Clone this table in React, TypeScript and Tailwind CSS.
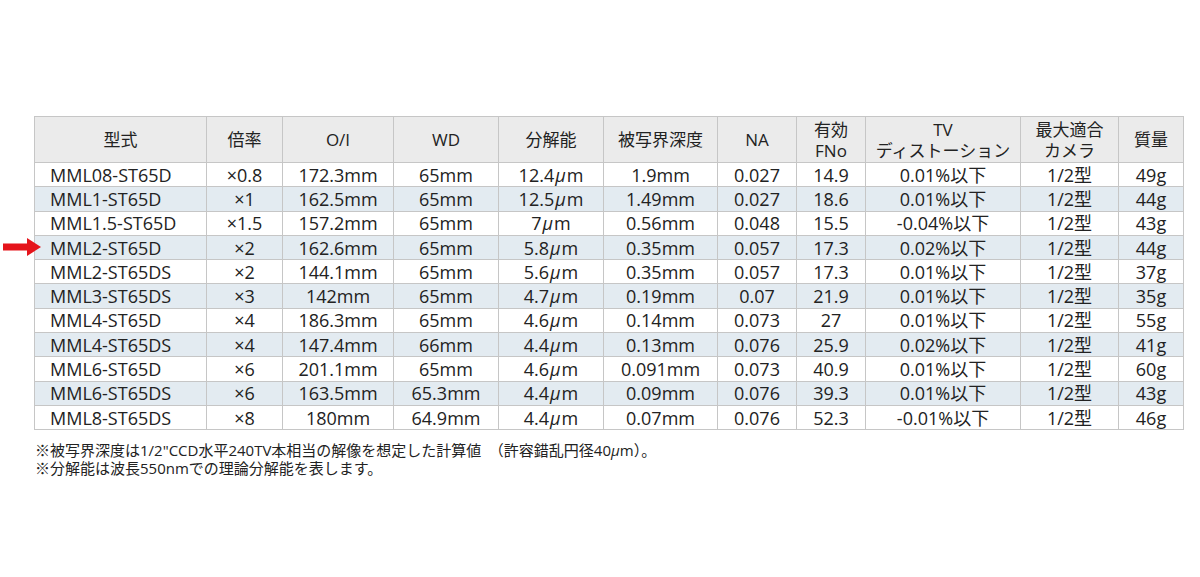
import React from "react";

const headers: React.ReactNode[] = [
  "型式",
  "倍率",
  "O/I",
  "WD",
  "分解能",
  "被写界深度",
  "NA",
  <>有効<br />FNo</>,
  <>TV<br />ディストーション</>,
  <>最大適合<br />カメラ</>,
  "質量",
];

const widths = [
  "w-[172px]",
  "w-[76px]",
  "w-[111px]",
  "w-[105px]",
  "w-[105px]",
  "w-[114px]",
  "w-[79px]",
  "w-[69px]",
  "w-[155px]",
  "w-[98px]",
  "w-[65px]",
];

const rows: string[][] = [
  ["MML08-ST65D", "×0.8", "172.3mm", "65mm", "12.4μm", "1.9mm", "0.027", "14.9", "0.01%以下", "1/2型", "49g"],
  ["MML1-ST65D", "×1", "162.5mm", "65mm", "12.5μm", "1.49mm", "0.027", "18.6", "0.01%以下", "1/2型", "44g"],
  ["MML1.5-ST65D", "×1.5", "157.2mm", "65mm", "7μm", "0.56mm", "0.048", "15.5", "-0.04%以下", "1/2型", "43g"],
  ["MML2-ST65D", "×2", "162.6mm", "65mm", "5.8μm", "0.35mm", "0.057", "17.3", "0.02%以下", "1/2型", "44g"],
  ["MML2-ST65DS", "×2", "144.1mm", "65mm", "5.6μm", "0.35mm", "0.057", "17.3", "0.01%以下", "1/2型", "37g"],
  ["MML3-ST65DS", "×3", "142mm", "65mm", "4.7μm", "0.19mm", "0.07", "21.9", "0.01%以下", "1/2型", "35g"],
  ["MML4-ST65D", "×4", "186.3mm", "65mm", "4.6μm", "0.14mm", "0.073", "27", "0.01%以下", "1/2型", "55g"],
  ["MML4-ST65DS", "×4", "147.4mm", "66mm", "4.4μm", "0.13mm", "0.076", "25.9", "0.02%以下", "1/2型", "41g"],
  ["MML6-ST65D", "×6", "201.1mm", "65mm", "4.6μm", "0.091mm", "0.073", "40.9", "0.01%以下", "1/2型", "60g"],
  ["MML6-ST65DS", "×6", "163.5mm", "65.3mm", "4.4μm", "0.09mm", "0.076", "39.3", "0.01%以下", "1/2型", "43g"],
  ["MML8-ST65DS", "×8", "180mm", "64.9mm", "4.4μm", "0.07mm", "0.076", "52.3", "-0.01%以下", "1/2型", "46g"],
];

// μ is set in italic in the source table
function cell(v: string) {
  const i = v.indexOf("μ");
  if (i < 0) return v;
  return (
    <>
      {v.slice(0, i)}
      <i className="px-[1px]">μ</i>
      {v.slice(i + 1)}
    </>
  );
}

export default function App() {
  return (
    <div className="w-[1200px] h-[577px] bg-white pt-[116px] pl-[34px] text-[#222] font-['Open_Sans','Noto_Sans_CJK_JP',sans-serif]">
      <div className="relative w-[1149px]">
        <svg
          className="absolute left-[-31px] top-[122px]"
          width="38"
          height="18"
          viewBox="0 0 38 18"
        >
          <rect x="0" y="5.5" width="26" height="7" fill="#e5141b" />
          <polygon points="24,0 38,9 24,18" fill="#e5141b" />
        </svg>
        <table className="w-[1149px] table-fixed border-collapse border border-[#b9b9b9]">
          <colgroup>
            {widths.map((w, i) => (
              <col key={i} className={w} />
            ))}
          </colgroup>
          <thead>
            <tr className="h-[46px] bg-[#ebebeb]">
              {headers.map((h, i) => (
                <th
                  key={i}
                  className="border border-[#c6c6c6] p-0 text-center align-middle text-[17px] font-normal leading-[21px]"
                >
                  {h}
                </th>
              ))}
            </tr>
          </thead>
          <tbody>
            {rows.map((r, ri) => (
              <tr key={ri} className={"h-[24.3px] " + (ri % 2 ? "bg-[#e3ebf1]" : "bg-white")}>
                {r.map((v, ci) => (
                  <td
                    key={ci}
                    className={
                      "border border-[#c6c6c6] py-0 text-[18px] leading-[22px] whitespace-nowrap " +
                      (ci === 0 ? "pl-[15px] text-left" : "px-0 text-center")
                    }
                  >
                    {cell(v)}
                  </td>
                ))}
              </tr>
            ))}
          </tbody>
        </table>
      </div>
      <div className="mt-[11px] pl-[1px] text-[15px] leading-[18px]">
        <p>※被写界深度は1/2"CCD水平240TV本相当の解像を想定した計算値　（許容錯乱円径40<i>μ</i>m）。</p>
        <p>※分解能は波長550nmでの理論分解能を表します。</p>
      </div>
    </div>
  );
}
